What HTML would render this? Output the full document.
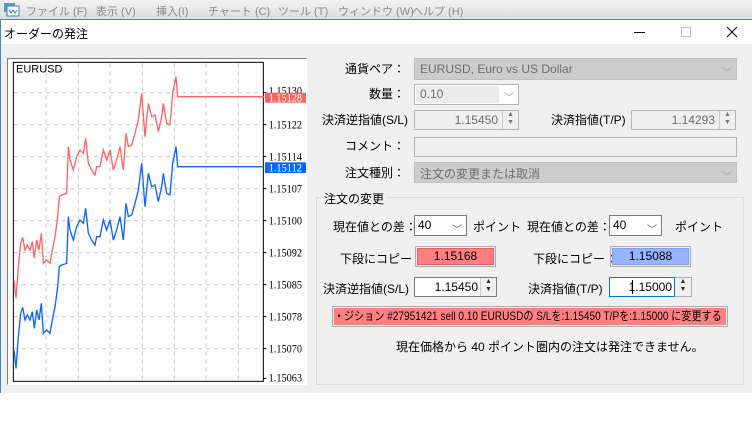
<!DOCTYPE html>
<html><head><meta charset="utf-8"><style>
*{margin:0;padding:0;box-sizing:border-box}
body{width:752px;height:434px;background:#fff;position:relative;overflow:hidden;font-family:"Liberation Sans","Noto Sans CJK JP",sans-serif;font-size:12px;color:#000}
.a{position:absolute;white-space:nowrap}
#menu{left:0;top:0;width:752px;height:19px;background:linear-gradient(#f3f3f3,#dedede)}
.m{color:#8a8a8a;top:3px;font-size:11px}
#body{left:0;top:44px;width:752px;height:349px;background:#f0f0f0}
.lbl{text-align:right;line-height:14px}
.box{border:1px solid #b4b4b4}
</style></head><body>
<div id="menu" class="a"></div>
<svg class="a" style="left:3px;top:1px" width="17" height="16" viewBox="0 0 17 16"><rect x="1" y="2" width="11" height="9" fill="#5b9bd5"/><rect x="4" y="5" width="12" height="10" fill="#fff" stroke="#3b78c2"/><path d="M6 9l2 3 2-3 2 3 2-3" stroke="#3b78c2" fill="none"/></svg>
<div class="a m" style="left:26px">ファイル (F)</div>
<div class="a m" style="left:96px">表示 (V)</div>
<div class="a m" style="left:156px">挿入(I)</div>
<div class="a m" style="left:208px">チャート (C)</div>
<div class="a m" style="left:278px">ツール (T)</div>
<div class="a m" style="left:338px">ウィンドウ (W)</div>
<div class="a m" style="left:412px">ヘルプ (H)</div>
<div class="a" style="left:0;top:19px;width:752px;height:1px;background:#3c88cf"></div>
<div class="a" style="left:0;top:19px;width:1px;height:374px;background:#3c88cf"></div>
<div class="a" style="left:4px;top:25px;font-size:12px">オーダーの発注</div>
<div class="a" style="left:634px;top:32px;width:11px;height:1px;background:#000"></div>
<div class="a" style="left:681px;top:27px;width:10px;height:10px;border:1px solid #c0c0c0"></div>
<svg class="a" style="left:726px;top:26px" width="12" height="12"><path d="M1 1L11 11M11 1L1 11" stroke="#000"/></svg>
<div id="body" class="a"></div>
<div class="a" style="left:0;top:44px;width:1px;height:349px;background:#3c88cf"></div>

<!-- chart -->
<div class="a" style="left:7px;top:58px;width:300px;height:327px;background:#fff;border-top:1px solid #808080;border-left:1px solid #808080;border-right:1px solid #fff;border-bottom:1px solid #fff"></div>
<svg class="a" style="left:0;top:50px" width="310" height="340" viewBox="0 0 930 1020">
<rect x="40" y="37" width="750" height="957" fill="#fff" stroke="#000" stroke-width="3"/>
<g stroke="#c8c8c8" stroke-width="3" stroke-dasharray="12,12">
<path d="M138 40V992M235 40V992M330 40V992M427 40V992M523 40V992M618 40V992M715 40V992"/>
<path d="M42 128H788M42 224H788M42 320H788M42 416H788M42 512H788M42 608H788M42 704H788M42 800H788M42 896H788"/>
</g>
<g stroke="#000" stroke-width="3"><path d="M790 128h9M790 224h9M790 320h9M790 416h9M790 512h9M790 608h9M790 704h9M790 800h9M790 896h9M790 985h9"/></g>
<path fill="none" stroke="#ff6464" stroke-width="4" d="M42 690L48 745L55 650L62 580L68 562L75 600L82 585L90 600L97 575L103 625L110 570L117 600L124 550L130 640L140 630L150 640L157 600L165 560L172 510L178 440L185 435L200 430L205 290L210 330L220 360L230 320L240 300L250 310L257 265L265 340L275 360L285 375L290 350L300 350L310 300L320 330L330 300L340 360L350 330L360 290L370 360L378 250L385 290L395 285L405 250L415 210L425 130L435 260L445 160L455 200L465 195L475 245L485 200L490 160L500 220L510 225L518 130L528 80L533 140L792 140"/>
<path fill="none" stroke="#0a64ff" stroke-width="4" transform="translate(0,210)" d="M42 690L48 745L55 650L62 580L68 562L75 600L82 585L90 600L97 575L103 625L110 570L117 600L124 550L130 640L140 630L150 640L157 600L165 560L172 510L178 440L185 435L200 430L205 290L210 330L220 360L230 320L240 300L250 310L257 265L265 340L275 360L285 375L290 350L300 350L310 300L320 330L330 300L340 360L350 330L360 290L370 360L378 250L385 290L395 285L405 250L415 210L425 130L435 260L445 160L455 200L465 195L475 245L485 200L490 160L500 220L510 225L518 130L528 80L533 140L792 140"/>
<text x="48" y="68" font-family="Liberation Sans" font-size="33">EURUSD</text>
<g font-family="Liberation Serif" font-size="36">
<text x="806" y="133" textLength="100" lengthAdjust="spacingAndGlyphs">1.15130</text>
<text x="806" y="235" textLength="100" lengthAdjust="spacingAndGlyphs">1.15122</text>
<text x="806" y="331" textLength="100" lengthAdjust="spacingAndGlyphs">1.15114</text>
<text x="806" y="427" textLength="100" lengthAdjust="spacingAndGlyphs">1.15107</text>
<text x="806" y="523" textLength="100" lengthAdjust="spacingAndGlyphs">1.15100</text>
<text x="806" y="619" textLength="100" lengthAdjust="spacingAndGlyphs">1.15092</text>
<text x="806" y="715" textLength="100" lengthAdjust="spacingAndGlyphs">1.15085</text>
<text x="806" y="811" textLength="100" lengthAdjust="spacingAndGlyphs">1.15078</text>
<text x="806" y="907" textLength="100" lengthAdjust="spacingAndGlyphs">1.15070</text>
<text x="806" y="995" textLength="100" lengthAdjust="spacingAndGlyphs">1.15063</text>
<rect x="795" y="128" width="123" height="30" fill="#ff6464"/>
<text x="806" y="154" fill="#fff" textLength="100" lengthAdjust="spacingAndGlyphs">1.15128</text>
<rect x="795" y="337" width="123" height="32" fill="#0a64ff"/>
<text x="806" y="364" fill="#fff" textLength="100" lengthAdjust="spacingAndGlyphs">1.15112</text>
</g>
</svg>

<!-- form -->
<div class="a lbl" style="right:347px;top:62px">通貨ペア：</div>
<div class="a" style="left:414px;top:58px;width:323px;height:22px;background:#cccccc;border:1px solid #c0c0c0;color:#6d6d6d;padding:3px 5px">EURUSD, Euro vs US Dollar</div>
<div class="a" style="left:722px;top:64px;color:#a0a0a0;font-size:10px">﹀</div>
<div class="a lbl" style="right:347px;top:87px">数量：</div>
<div class="a" style="left:414px;top:84px;width:105px;height:21px;background:#fff;border:1px solid #b4b4b4"></div>
<div class="a" style="left:416px;top:86px;width:83px;height:17px;background:#ececec;color:#6d6d6d;padding:1px 4px">0.10</div>
<div class="a" style="left:504px;top:89px;color:#a0a0a0;font-size:10px">﹀</div>
<div class="a lbl" style="left:322px;top:113px">決済逆指値(S/L)</div>
<div class="a box" style="left:414px;top:110px;width:105px;height:20px;background:#f0f0f0;color:#6d6d6d;text-align:right;padding:2px 20px 0 0">1.15450</div>
<div class="a" style="left:502px;top:111px;width:16px;height:18px;border-left:1px solid #ccc;color:#777;font-size:7px;line-height:8px;text-align:center">▲<br>▼</div>
<div class="a lbl" style="left:551px;top:113px">決済指値(T/P)</div>
<div class="a box" style="left:631px;top:110px;width:105px;height:20px;background:#f0f0f0;color:#6d6d6d;text-align:right;padding:2px 20px 0 0">1.14293</div>
<div class="a" style="left:719px;top:111px;width:16px;height:18px;border-left:1px solid #ccc;color:#777;font-size:7px;line-height:8px;text-align:center">▲<br>▼</div>
<div class="a lbl" style="right:347px;top:139px">コメント：</div>
<div class="a box" style="left:414px;top:137px;width:323px;height:20px;background:#f0f0f0"></div>
<div class="a lbl" style="right:347px;top:166px">注文種別：</div>
<div class="a" style="left:414px;top:162px;width:323px;height:21px;background:#cccccc;border:1px solid #c0c0c0;color:#6d6d6d;padding:2px 5px">注文の変更または取消</div>
<div class="a" style="left:722px;top:168px;color:#a0a0a0;font-size:10px">﹀</div>

<div class="a" style="left:316px;top:197px;width:428px;height:188px;border:1px solid #dcdcdc"></div>
<div class="a" style="left:322px;top:190px;background:#f0f0f0;padding:0 2px">注文の変更</div>

<div class="a" style="left:333px;top:218px">現在値との差：</div>
<div class="a" style="left:414px;top:215px;width:53px;height:21px;background:#fff;border:1px solid #7a7a7a;padding:2px 3px">40</div>
<div class="a" style="left:452px;top:221px;font-size:10px;color:#555">﹀</div>
<div class="a" style="left:473px;top:218px">ポイント</div>
<div class="a" style="left:527px;top:218px">現在値との差：</div>
<div class="a" style="left:609px;top:215px;width:53px;height:21px;background:#fff;border:1px solid #7a7a7a;padding:2px 3px">40</div>
<div class="a" style="left:647px;top:221px;font-size:10px;color:#555">﹀</div>
<div class="a" style="left:675px;top:218px">ポイント</div>

<div class="a" style="left:340px;top:250px">下段にコピー：</div>
<div class="a" style="left:415px;top:246px;width:81px;height:21px;border:1px solid #adadad;padding:1px"><div style="height:100%;background:#ff8080;border:1px solid #e06060;text-align:center;line-height:15px">1.15168</div></div>
<div class="a" style="left:533px;top:250px">下段にコピー：</div>
<div class="a" style="left:610px;top:246px;width:81px;height:21px;border:1px solid #adadad;padding:1px"><div style="height:100%;background:#99b4ff;border:1px solid #7f9fe8;text-align:center;line-height:15px">1.15088</div></div>

<div class="a" style="left:323px;top:280px">決済逆指値(S/L)</div>
<div class="a" style="left:414px;top:277px;width:83px;height:20px;background:#fff;border:1px solid #7a7a7a;text-align:right;padding:2px 18px 0 0">1.15450</div>
<div class="a" style="left:480px;top:278px;width:16px;height:18px;background:#f0f0f0;border-left:1px solid #ccc;font-size:7px;line-height:8px;text-align:center;color:#333">▲<br>▼</div>
<div class="a" style="left:528px;top:280px">決済指値(T/P)</div>
<div class="a" style="left:609px;top:277px;width:83px;height:20px;background:#fff;border:1px solid #adadad"></div>
<div class="a" style="left:609px;top:277px;width:66px;height:20px;border:1px solid #0078d7;text-align:right;padding:2px 2px 0 0">1.15000</div>
<div class="a" style="left:632px;top:280px;width:1px;height:14px;background:#000"></div>
<div class="a" style="left:675px;top:278px;width:16px;height:18px;background:#f0f0f0;font-size:7px;line-height:8px;text-align:center;color:#333">▲<br>▼</div>

<div class="a" style="left:332px;top:306px;width:396px;height:21px;border:1px solid #adadad;padding:1px;overflow:hidden"><div style="height:100%;background:#ff8080;line-height:17px;white-space:nowrap;font-size:12px"><span style="display:inline-block;transform:scaleX(0.84);transform-origin:0 50%">・ジション #27951421 sell 0.10 EURUSDの S/Lを:1.15450 T/Pを:1.15000 に変更する</span></div></div>

<div class="a" style="left:396px;top:338px">現在価格から 40 ポイント圏内の注文は発注できません。</div>
</body></html>
